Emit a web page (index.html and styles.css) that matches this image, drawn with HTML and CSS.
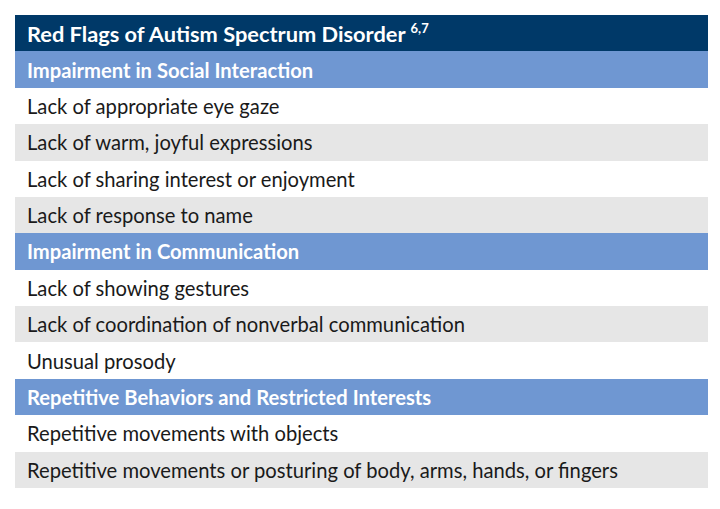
FILE: index.html
```html
<!DOCTYPE html>
<html>
<head>
<meta charset="utf-8">
<link rel="stylesheet" href="styles.css">
</head>
<body>
<div class="table">
  <div class="row title">Red Flags of Autism Spectrum Disorder <sup>6,7</sup></div>
  <div class="row section">Impairment in Social Interaction</div>
  <div class="row">Lack of appropriate eye gaze</div>
  <div class="row alt">Lack of warm, joyful expressions</div>
  <div class="row">Lack of sharing interest or enjoyment</div>
  <div class="row alt">Lack of response to name</div>
  <div class="row section">Impairment in Communication</div>
  <div class="row">Lack of showing gestures</div>
  <div class="row alt">Lack of coordination of nonverbal communication</div>
  <div class="row">Unusual prosody</div>
  <div class="row section">Repetitive Behaviors and Restricted Interests</div>
  <div class="row">Repetitive movements with objects</div>
  <div class="row alt">Repetitive movements or posturing of body, arms, hands, or fingers</div>
</div>
</body>
</html>
```
FILE: styles.css
```css
html, body {
  margin: 0;
  padding: 0;
  background: #ffffff;
}
body {
  padding: 15px 0 0 15px;
  font-family: Lato, "Open Sans", sans-serif;
}
.table {
  width: 693px;
  display: grid;
  grid-auto-rows: 36.38px;
}
.row {
  display: flex;
  align-items: center;
  padding-left: 12px;
  font-size: 20.2px;
  color: #1a1a1a;
  background: #ffffff;
}
.row.alt {
  background: #e6e6e6;
}
.row.title {
  background: #003968;
  color: #ffffff;
  font-weight: bold;
  font-size: 21.8px;
}
.row.section {
  background: #6f97d2;
  color: #ffffff;
  font-weight: bold;
  font-size: 20.2px;
}
.title sup {
  font-size: 13px;
  align-self: flex-start;
  margin-left: 5px;
  margin-top: 5px;
}
```
